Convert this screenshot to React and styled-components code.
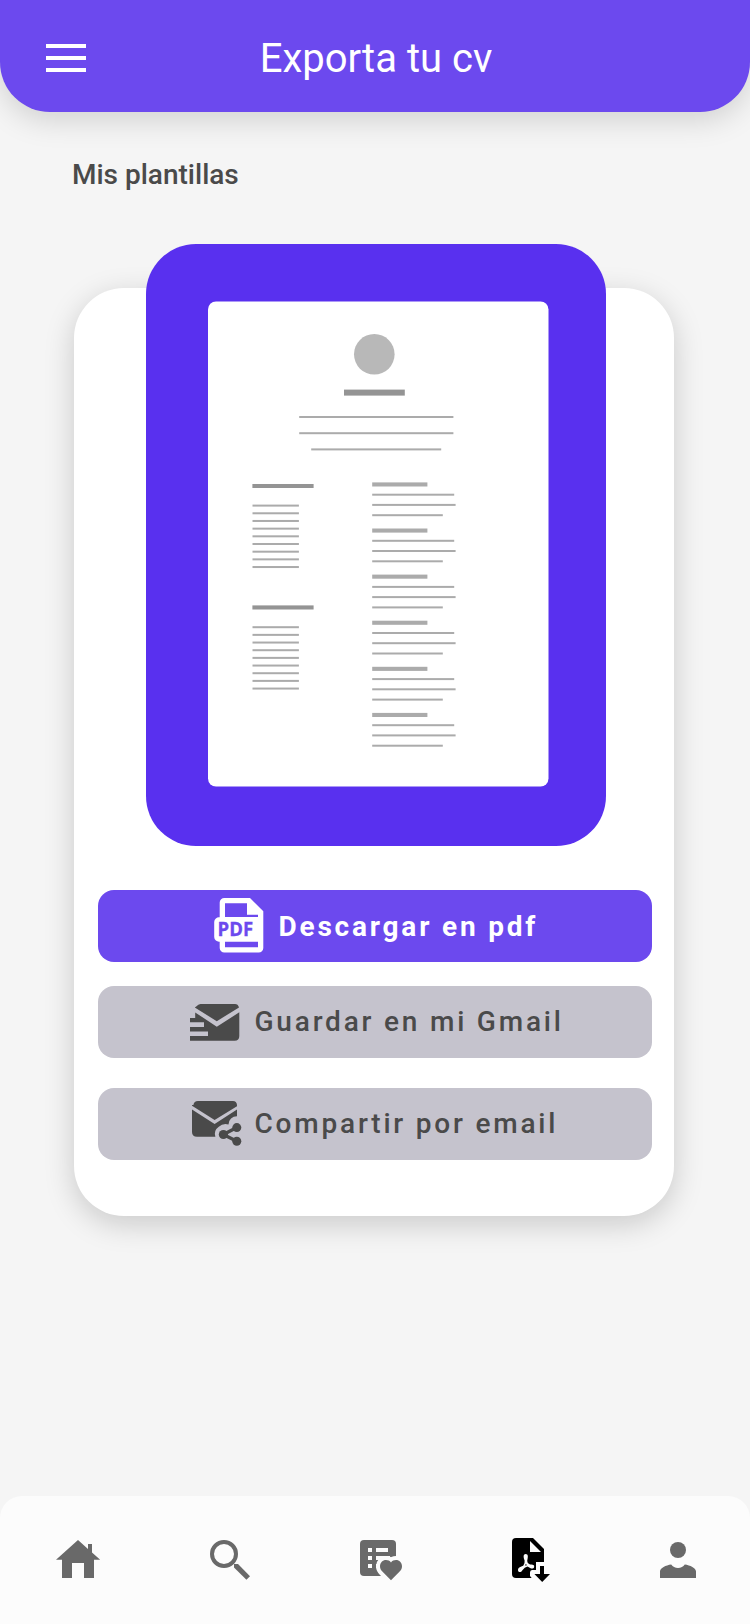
import React from "react";
import styled, { createGlobalStyle } from "styled-components";

const GlobalStyle = createGlobalStyle`
  *, *::before, *::after { box-sizing: border-box; }
  body { margin: 0; background: #f5f5f5; }
`;

const Screen = styled.div`
  display: flex;
  flex-direction: column;
  width: 750px;
  height: 1624px;
  overflow: hidden;
  background: #f5f5f5;
  color: #4a4a4a;
  font-family: Roboto, "Liberation Sans", sans-serif;
`;

const Header = styled.header`
  display: grid;
  grid-template-columns: 88px 1fr 86px;
  flex: none;
  height: 112px;
  padding-top: 34px;
  border-radius: 0 0 50px 50px;
  background: #6c49ee;
  box-shadow: 0 8px 30px rgba(0, 0, 0, 0.15);
`;

const MenuButton = styled.button`
  display: flex;
  flex-direction: column;
  gap: 8px;
  width: 86px;
  padding: 10px 0 0 46px;
  border: 0;
  background: none;
`;

const MenuBar = styled.span`
  width: 40px;
  height: 4px;
  background: #fff;
`;

const Title = styled.h1`
  margin: 0;
  color: #fff;
  font-size: 40px;
  font-weight: 400;
  line-height: 50px;
  text-align: center;
`;

const SectionTitle = styled.h2`
  margin: 47px 0 0 72px;
  font-size: 28px;
  font-weight: 500;
  line-height: 32px;
`;

const Card = styled.section`
  display: flex;
  flex-direction: column;
  flex: none;
  width: 600px;
  height: 928px;
  margin: 97px 0 0 74px;
  padding: 0 22px 0 24px;
  border-radius: 50px;
  background: #fff;
  box-shadow: 0 8px 30px rgba(0, 0, 0, 0.18);
`;

const Preview = styled.div`
  flex: none;
  width: 460px;
  height: 602px;
  margin: -44px 0 44px 48px;
  padding: 57px 0 0 62px;
  border-radius: 50px;
  background: #5930ef;
`;

const Action = styled.button`
  display: flex;
  align-items: center;
  flex: none;
  height: 72px;
  margin: 0 0 ${(p) => p.$gap || 0}px;
  padding: 0 0 0 ${(p) => p.$inset}px;
  border: 0;
  border-radius: 16px;
  background: ${(p) => (p.$primary ? "#6c49ee" : "#c5c3cd")};
  color: ${(p) => (p.$primary ? "#fff" : "#4a4a4a")};
  font-family: inherit;
  font-size: 28px;
  font-weight: ${(p) => (p.$primary ? 700 : 500)};
  letter-spacing: 2.8px;
  white-space: nowrap;
`;

const ActionIcon = styled.svg`
  flex: none;
  width: 52px;
  height: 60px;
  margin-right: ${(p) => p.$space}px;
`;

const ActionLabel = styled.span`
  line-height: 32px;
  padding-top: ${(p) => p.$drop || 0}px;
`;

const TabBar = styled.nav`
  display: flex;
  justify-content: space-between;
  flex: none;
  height: 128px;
  margin-top: auto;
  padding: 40px 48px 0 54px;
  border-radius: 22px 22px 0 0;
  background: #fcfcfc;
`;

const Tab = styled.button`
  display: block;
  width: 48px;
  height: 48px;
  padding: 0;
  border: 0;
  background: none;
  color: ${(p) => (p.$active ? "#000" : "#696969")};
`;

const TabIcon = styled.svg`
  display: block;
  width: 48px;
  height: 48px;
  fill: currentColor;
`;

const nine = [0, 1, 2, 3, 4, 5, 6, 7, 8];

function ResumeDrawing() {
  return (
    <svg width="341" height="486" viewBox="208 301 341 486">
      <rect x="208" y="301.5" width="340.5" height="485" rx="8" fill="#fff" />
      <circle cx="374.3" cy="354.3" r="20.3" fill="#b8b8b8" />
      <g fill="#949494">
        <rect x="344" y="389.6" width="60.8" height="6" />
        <rect x="252.4" y="484" width="61.2" height="4" />
        <rect x="252.4" y="605.4" width="61.2" height="4.1" />
      </g>
      <g fill="#ababab">
        <rect x="299.2" y="416" width="154.2" height="2" />
        <rect x="299.2" y="432.2" width="154.2" height="2" />
        <rect x="311.2" y="448.4" width="130" height="2" />
        {nine.map((i) => (
          <rect key={i} x="252.5" y={504.6 + i * 7.68} width="46.4" height="2" />
        ))}
        {nine.map((i) => (
          <rect key={i} x="252.5" y={626.2 + i * 7.67} width="46.4" height="2" />
        ))}
        {[0, 1, 2, 3, 4, 5].map((i) => (
          <g key={i} transform={`translate(0 ${i * 46.1})`}>
            <rect x="372.2" y="482.4" width="55.2" height="4.1" />
            <rect x="372.2" y="493.7" width="82" height="2" />
            <rect x="372.2" y="503.9" width="83.4" height="2" />
            <rect x="372.2" y="514.2" width="70.6" height="2" />
          </g>
        ))}
      </g>
    </svg>
  );
}

function PdfFileIcon() {
  return (
    <ActionIcon viewBox="0 0 52 60" $space={12.5}>
      <path
        fill="#fff"
        fillRule="evenodd"
        d="M10.5 2H36L49.3 15.3V52a4.6 4.6 0 0 1-4.6 4.6H10.5A4.6 4.6 0 0 1 5.7 52V45.7A4.8 4.8 0 0 1 .2 41V26A4.8 4.8 0 0 1 5.7 21.3V6.6A4.6 4.6 0 0 1 10.5 2ZM11 7.3V21H44V18.7H33V7.3ZM11 45.7V51.2H44V45.7Z"
      />
      <text
        x="3.6"
        y="40"
        fill="#6c49ee"
        stroke="#6c49ee"
        strokeWidth="0.3"
        fontFamily="'Open Sans', sans-serif"
        fontSize="18.8"
        fontWeight="700"
        letterSpacing="0"
        textLength="35.5"
        lengthAdjust="spacingAndGlyphs"
      >
        PDF
      </text>
    </ActionIcon>
  );
}

function MailFastIcon() {
  return (
    <ActionIcon viewBox="0 0 52 60" $space={12.5}>
      <g fill="#4a4a4a">
        <path d="M6.2 14.6Q8.3 12 10.5 12H45Q48 12 49 15.4L26.8 29.2L4.8 15.6Z" />
        <path d="M5.2 20.4L26.8 34.8L49.3 20.3V44Q49.3 48.7 44.6 48.7H0V44H18V39.5H0V35H14V30.2H0V26H5.2Z" />
      </g>
    </ActionIcon>
  );
}

function MailShareIcon() {
  return (
    <ActionIcon viewBox="0 0 52 60" $space={10.5}>
      <path
        fill="#4a4a4a"
        d="M1.4 11Q2 7 6 7H41Q44.6 7 45 11V12.2L22.6 26L0 11.8V11ZM0 15.6L22.6 30L45 15.6V22.2A8.4 8.4 0 0 0 36.5 30.5A10 10 0 0 0 26.8 32.8A8.8 8.8 0 0 0 23.4 42.7H5Q0 42.7 0 38Z"
      />
      <g fill="#4a4a4a">
        <circle cx="31.4" cy="40.5" r="4.6" />
        <circle cx="44.8" cy="33.6" r="4.5" />
        <circle cx="44.8" cy="47.2" r="4.5" />
      </g>
      <path d="M44.8 33.6L31.4 40.5L44.8 47.2" fill="none" stroke="#4a4a4a" strokeWidth="3.4" />
    </ActionIcon>
  );
}

function HomeIcon() {
  return (
    <TabIcon viewBox="0 0 48 48">
      <path d="M24 4L34 13V8h4v8.4l8.2 7.3H40V42H30V27H18V42H8V23.7H2Z" />
    </TabIcon>
  );
}

function SearchIcon() {
  return (
    <TabIcon viewBox="0 0 48 48">
      <circle cx="20" cy="18" r="12" fill="none" stroke="currentColor" strokeWidth="4" />
      <path d="M30 28h4L46 40.2L42.4 43.8L30 31.6Z" />
    </TabIcon>
  );
}

const heart =
  "M37 44.2L28.6 35.8C26.8 34 26 32.2 26 30.2C26 26.6 28.7 24 32 24C34 24 35.8 24.8 37 26.4C38.2 24.8 40 24 42 24C45.3 24 48 26.6 48 30.2C48 32.2 47.2 34 45.4 35.8Z";

function ListHeartIcon() {
  return (
    <TabIcon viewBox="0 0 48 48">
      <rect x="6" y="4" width="36" height="36" rx="4" />
      <path
        fill="#fcfcfc"
        d="M14 12h4v4h-4ZM14 20h4v4h-4ZM14 28h4v4h-4ZM22 12h12v4H22ZM22 20h14v4H22ZM22 28h4v4h-4Z"
      />
      <path d={heart} stroke="#fcfcfc" strokeWidth="8" strokeLinejoin="round" fill="#fcfcfc" />
      <path d={heart} />
    </TabIcon>
  );
}

function PdfDownloadIcon() {
  return (
    <TabIcon viewBox="0 0 48 48">
      <path d="M12 2H29L40 13V42H12A4 4 0 0 1 8 38V6A4 4 0 0 1 12 2Z" />
      <g fill="#fcfcfc">
        <path d="M26 5V16H37Z" />
        <path d="M21.6 18C24.6 18 24 21 23.2 25Q23 27 26 28.5C29 28.2 31 29 30 31.4C29 33.5 26.5 32.4 23.5 30.5Q20.5 31 18.4 34.2C17 37 13.8 36.5 14 33.8C14.4 31 17.5 30.7 19.4 29.5Q21 27.5 20.6 24.5C19 20.5 19.5 18.2 21.6 18ZM21.9 28L20.8 29.6L23.1 29.3Z" />
        <path d="M32 26H42V36H46V46H31L26 40V36.5Q26 34 28 34H32Z" />
      </g>
      <path d="M36 30h4v8h6L38.2 46L30.4 38H36Z" />
    </TabIcon>
  );
}

function PersonIcon() {
  return (
    <TabIcon viewBox="0 0 48 48">
      <circle cx="24" cy="14" r="8" />
      <path d="M6 42V35.5C6 32.3 12 29.2 17.2 28.6Q19.6 32 24 32T30.8 28.6C36 29.2 42 32.3 42 35.5V42Z" />
    </TabIcon>
  );
}

export default function App() {
  return (
    <>
      <GlobalStyle />
      <Screen>
        <Header>
          <MenuButton aria-label="Menú">
            <MenuBar />
            <MenuBar />
            <MenuBar />
          </MenuButton>
          <Title>Exporta tu cv</Title>
        </Header>
        <SectionTitle>Mis plantillas</SectionTitle>
        <Card>
          <Preview>
            <ResumeDrawing />
          </Preview>
          <Action $primary $inset={116} $gap={24}>
            <PdfFileIcon />
            <ActionLabel $drop={2}>Descargar en pdf</ActionLabel>
          </Action>
          <Action $inset={92} $gap={30}>
            <MailFastIcon />
            <ActionLabel>Guardar en mi Gmail</ActionLabel>
          </Action>
          <Action $inset={94}>
            <MailShareIcon />
            <ActionLabel>Compartir por email</ActionLabel>
          </Action>
        </Card>
        <TabBar>
          <Tab aria-label="Inicio"><HomeIcon /></Tab>
          <Tab aria-label="Buscar"><SearchIcon /></Tab>
          <Tab aria-label="Favoritos"><ListHeartIcon /></Tab>
          <Tab aria-label="Exportar" $active><PdfDownloadIcon /></Tab>
          <Tab aria-label="Perfil"><PersonIcon /></Tab>
        </TabBar>
      </Screen>
    </>
  );
}
